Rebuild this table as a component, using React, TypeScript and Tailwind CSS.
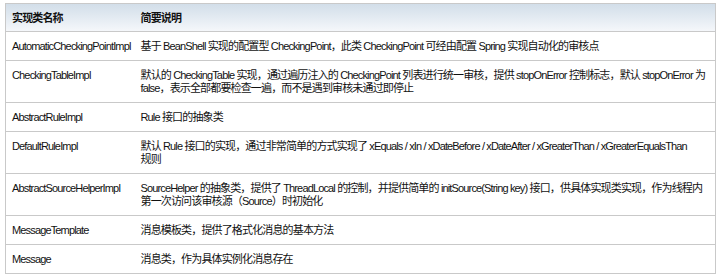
import React from "react"

const rows: { name: string; desc: string[] }[] = [
  {
    name: "AutomaticCheckingPointImpl",
    desc: ["基于 BeanShell 实现的配置型 CheckingPoint，此类 CheckingPoint 可经由配置 Spring 实现自动化的审核点"],
  },
  {
    name: "CheckingTableImpl",
    desc: [
      "默认的 CheckingTable 实现，通过遍历注入的 CheckingPoint 列表进行统一审核，提供 stopOnError 控制标志，默认 stopOnError 为",
      "false，表示全部都要检查一遍，而不是遇到审核未通过即停止",
    ],
  },
  { name: "AbstractRuleImpl", desc: ["Rule 接口的抽象类"] },
  {
    name: "DefaultRuleImpl",
    desc: [
      "默认 Rule 接口的实现，通过非常简单的方式实现了 xEquals / xIn / xDateBefore / xDateAfter / xGreaterThan / xGreaterEqualsThan",
      "规则",
    ],
  },
  {
    name: "AbstractSourceHelperImpl",
    desc: [
      "SourceHelper 的抽象类，提供了 ThreadLocal 的控制，并提供简单的 initSource(String key) 接口，供具体实现类实现，作为线程内",
      "第一次访问该审核源（Source）时初始化",
    ],
  },
  { name: "MessageTemplate", desc: ["消息模板类，提供了格式化消息的基本方法"] },
  { name: "Message", desc: ["消息类，作为具体实例化消息存在"] },
]

export default function App() {
  return (
    <div className="w-[720px] h-[274px] bg-white pt-[3px] pl-[5px] font-['Liberation_Sans','Noto_Sans_CJK_SC',sans-serif] text-[11px] leading-[13px] tracking-[-0.85px] text-[#111]">
      <table className="w-[711px] border-collapse border border-[#c9c9c9] table-fixed">
        <colgroup>
          <col className="w-[129px]" />
          <col />
        </colgroup>
        <thead>
          <tr className="bg-gradient-to-b from-[#d2dee9] to-[#f6f8fb]">
            <th className="text-left font-bold pl-[6px] pt-[8px] pb-[6px]">实现类名称</th>
            <th className="text-left font-bold pl-[6px] pt-[8px] pb-[6px]">简要说明</th>
          </tr>
        </thead>
        <tbody>
          {rows.map((r) => (
            <tr key={r.name} className="border-t border-[#c9c9c9]">
              <td className="align-top pl-[6px] pt-[8px] pb-[7px] whitespace-nowrap">{r.name}</td>
              <td className="align-top pl-[6px] pt-[8px] pb-[7px] whitespace-nowrap">
                {r.desc.map((line, i) => (
                  <div key={i}>{line}</div>
                ))}
              </td>
            </tr>
          ))}
        </tbody>
      </table>
    </div>
  )
}
